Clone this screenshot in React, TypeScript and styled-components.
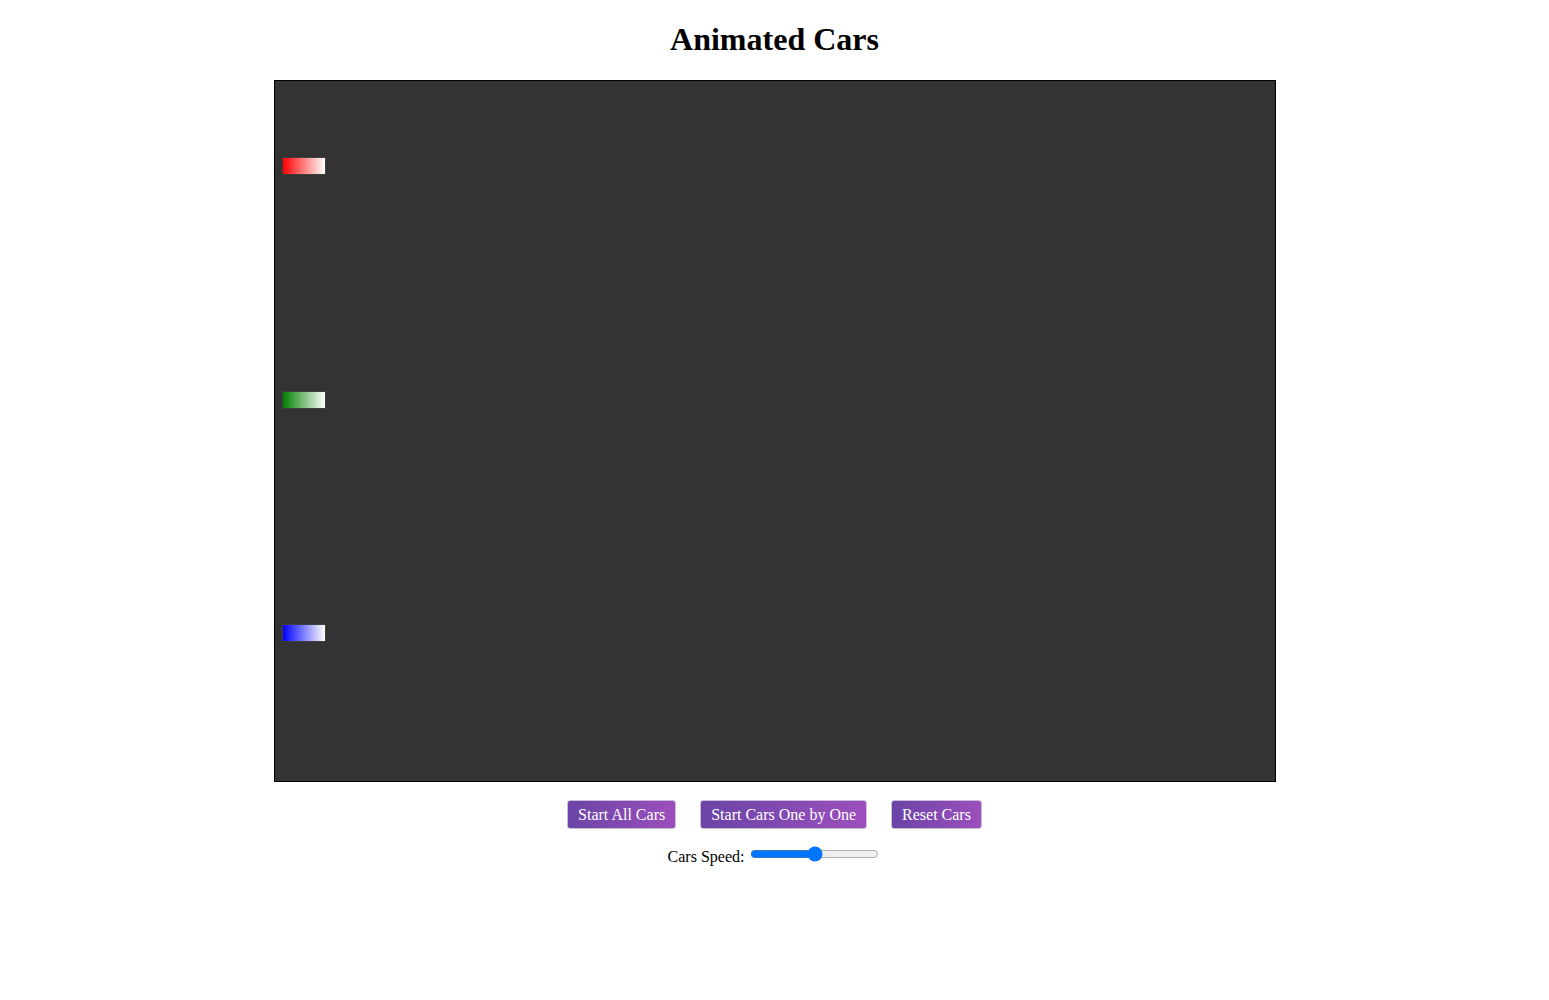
import React, { useState } from "react";
import styled, { createGlobalStyle } from "styled-components";

const GlobalStyle = createGlobalStyle`
  body {
    margin: 0;
    font-family: "Liberation Serif", "Times New Roman", serif;
    font-size: 16px;
    color: #000;
    background: #fff;
  }
`;

const Title = styled.h1`
  font-size: 32px;
  font-weight: bold;
  margin: 21.44px 0;
  text-align: center;
`;

const Track = styled.div`
  position: relative;
  width: 1000px;
  height: 700px;
  margin: 0 auto;
  background: #333333;
  border: 1px solid #000;
  overflow: hidden;
`;

const Car = styled.div<{ $color: string; $top: number }>`
  position: absolute;
  left: 8px;
  top: ${(p) => p.$top}px;
  width: 42px;
  height: 16px;
  box-shadow: 0 0 0 0.5px rgba(120, 120, 120, 0.35);
  background: linear-gradient(to right, ${(p) => p.$color}, #ffffff);
`;

const Controls = styled.div`
  display: flex;
  justify-content: center;
  gap: 24px;
  margin-top: 18px;
`;

const Button = styled.button`
  font-family: "Liberation Serif", "Times New Roman", serif;
  font-size: 16px;
  line-height: 17px;
  color: #fff;
  padding: 5px 10px;
  border: 1px solid #c9c0d6;
  border-radius: 3px;
  background: linear-gradient(to right, #6a44a6, #9c4fbd);
  cursor: pointer;
`;

const SpeedRow = styled.div`
  display: flex;
  justify-content: center;
  align-items: baseline;
  gap: 4px;
  margin-top: 15px;
`;

const Label = styled.label`
  font-size: 16px;
`;

const Range = styled.input`
  width: 129px;
  margin: 2px;
`;

const cars = [
  { color: "#ff0000", top: 77.33 },
  { color: "#008000", top: 310.67 },
  { color: "#0000ff", top: 544 },
];

export default function App() {
  const [speed, setSpeed] = useState(50);
  return (
    <>
      <GlobalStyle />
      <Title>Animated Cars</Title>
      <Track>
        {cars.map((c) => (
          <Car key={c.color} $color={c.color} $top={c.top} />
        ))}
      </Track>
      <Controls>
        <Button>Start All Cars</Button>
        <Button>Start Cars One by One</Button>
        <Button>Reset Cars</Button>
      </Controls>
      <SpeedRow>
        <Label htmlFor="speed">Cars Speed:</Label>
        <Range
          id="speed"
          type="range"
          min={0}
          max={100}
          value={speed}
          onChange={(e) => setSpeed(Number(e.target.value))}
        />
      </SpeedRow>
    </>
  );
}
